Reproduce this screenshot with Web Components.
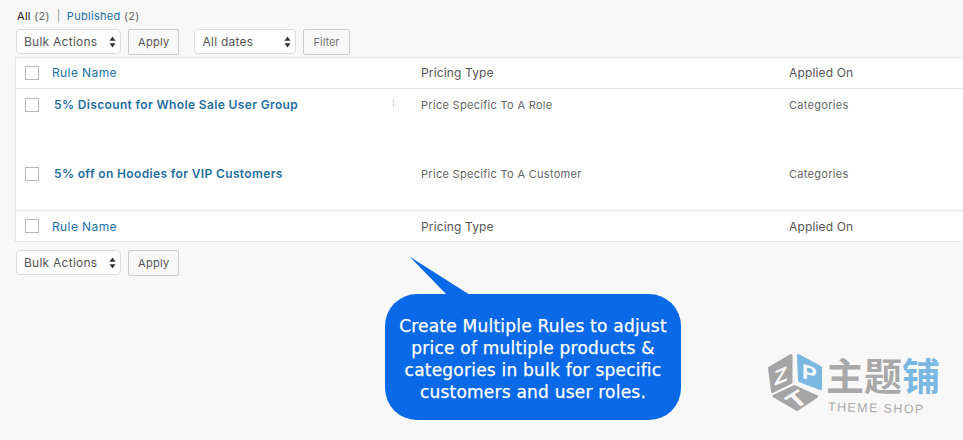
<!DOCTYPE html>
<html>
<head>
<meta charset="utf-8">
<title>Pricing Rules</title>
<style>
html, body { margin: 0; padding: 0; }
body {
    background: #f8f8f8;
    color: #444;
    font-family: Inter, "Liberation Sans", sans-serif;
    width: 963px;
    height: 440px;
    overflow: hidden;
    position: relative;
}
</style>
</head>
<body>
<list-page>
    <view-links></view-links>
    <table-nav>
        <select-box label="Bulk Actions" width="105"></select-box>
        <push-button label="Apply"></push-button>
        <select-box label="All dates" width="102" offset="8"></select-box>
        <push-button label="Filter" muted></push-button>
    </table-nav>
    <rule-table>
        <rule-row slot="head" kind="head" name="Rule Name" type="Pricing Type" applied="Applied On"></rule-row>
        <rule-row name="5% Discount for Whole Sale User Group" type="Price Specific To A Role" applied="Categories" dots></rule-row>
        <rule-row name="5% off on Hoodies for VIP Customers" type="Price Specific To A Customer" applied="Categories"></rule-row>
        <rule-row slot="foot" kind="foot" name="Rule Name" type="Pricing Type" applied="Applied On"></rule-row>
    </rule-table>
    <table-nav class="bottom">
        <select-box label="Bulk Actions" width="105"></select-box>
        <push-button label="Apply"></push-button>
    </table-nav>
</list-page>
<callout-bubble>Create Multiple Rules to adjust<br>price of multiple products &amp;<br>categories in bulk for specific<br>customers and user roles.</callout-bubble>
<shop-mark></shop-mark>

<script>
class ListPage extends HTMLElement {
    connectedCallback() {
        this.attachShadow({ mode: 'open' });
        this.shadowRoot.innerHTML = `
            <style>
                :host {
                    display: flex;
                    flex-direction: column;
                    padding: 8px 0 0 16px;
                }
            </style>
            <slot></slot>
        `;
    }
}

class ViewLinks extends HTMLElement {
    connectedCallback() {
        this.attachShadow({ mode: 'open' });
        this.shadowRoot.innerHTML = `
            <style>
                :host {
                    display: flex;
                    align-items: center;
                    height: 16px;
                    padding-left: 1px;
                    font-size: 11px;
                    letter-spacing: 0.3px;
                    color: #666;
                    white-space: pre;
                }
                b { font-weight: 400; color: #222; }
                a { color: #2271a5; text-decoration: none; }
                .sep { color: #999; margin: 0 6px 0 7px; }
            </style>
            <span><b>All</b> (2)</span><span class="sep">|</span><span><a>Published</a> (2)</span>
        `;
    }
}

class TableNav extends HTMLElement {
    connectedCallback() {
        this.attachShadow({ mode: 'open' });
        this.shadowRoot.innerHTML = `
            <style>
                :host {
                    display: flex;
                    gap: 7px;
                    margin-top: 5px;
                    height: 25px;
                    margin-bottom: 3px;
                }
                :host(.bottom) { margin-top: 8px; }
            </style>
            <slot></slot>
        `;
    }
}

class SelectBox extends HTMLElement {
    connectedCallback() {
        this.attachShadow({ mode: 'open' });
        const w = this.getAttribute('width');
        const off = this.getAttribute('offset') || 0;
        this.shadowRoot.innerHTML = `
            <style>
                :host {
                    display: flex;
                    align-items: center;
                    justify-content: space-between;
                    box-sizing: border-box;
                    width: ${w}px;
                    height: 25px;
                    margin-left: ${off}px;
                    padding: 0 4px 0 7px;
                    background: #fff;
                    border: 1px solid #dcdcdc;
                    border-radius: 4px;
                    font-size: 12px;
                    letter-spacing: 0.25px;
                    color: #555;
                }
                svg { display: block; }
            </style>
            <span>${this.getAttribute('label')}</span>
            <svg width="7" height="12" viewBox="0 0 7 12"><path d="M3.5 0.5L6.5 4.8H0.5Z M3.5 11.5L6.5 7.2H0.5Z" fill="#333"/></svg>
        `;
    }
}

class PushButton extends HTMLElement {
    connectedCallback() {
        this.attachShadow({ mode: 'open' });
        const muted = this.hasAttribute('muted');
        this.shadowRoot.innerHTML = `
            <style>
                :host {
                    display: flex;
                    align-items: center;
                    box-sizing: border-box;
                    height: 26px;
                    padding: 0 ${muted ? 9 : 9}px;
                    background: #f8f8f8;
                    border: 1px solid #ccc;
                    border-radius: 2px;
                    font-size: 11px;
                    letter-spacing: ${muted ? 0 : 0.3}px;
                    color: ${muted ? '#777' : '#555'};
                }
            </style>
            <span>${this.getAttribute('label')}</span>
        `;
    }
}

class RuleTable extends HTMLElement {
    connectedCallback() {
        this.attachShadow({ mode: 'open' });
        this.shadowRoot.innerHTML = `
            <style>
                :host {
                    display: block;
                    background: #fff;
                    border-left: 1px solid #e5e5e5;
                    border-bottom: 1px solid #e2e2e2;
                    border-top: 1px solid #e5e5e5;
                    margin-left: -1px;
                }
                .body { display: block; height: 121px; }
            </style>
            <slot name="head"></slot>
            <div class="body"><slot></slot></div>
            <slot name="foot"></slot>
        `;
    }
}

class RuleRow extends HTMLElement {
    connectedCallback() {
        this.attachShadow({ mode: 'open' });
        const kind = this.getAttribute('kind') || 'body';
        const dots = this.hasAttribute('dots') ? '<i class="dots"></i>' : '';
        this.shadowRoot.innerHTML = `
            <style>
                :host {
                    display: grid;
                    grid-template-columns: 405px 368px 1fr;
                    box-sizing: border-box;
                    position: relative;
                }
                :host([kind="head"]) {
                    height: 31px;
                    align-items: center;
                    border-bottom: 1px solid #e3e3e3;
                }
                :host([kind="head"]) .type, :host([kind="head"]) a { margin-top: -1px; }
                :host([kind="foot"]) {
                    height: 31px;
                    align-items: center;
                    border-top: 1px solid #e3e3e3;
                }
                :host(:not([kind])) {
                    height: 69px;
                    padding-top: 9px;
                    align-items: start;
                }
                .name { display: flex; align-items: center; gap: 13px; padding-left: 9px; }
                .check {
                    box-sizing: border-box;
                    width: 14px;
                    height: 14px;
                    flex: none;
                    background: #fff;
                    border: 1px solid #b4b9be;
                }
                a { color: #2271a5; text-decoration: none; font-size: 12px; letter-spacing: 0.4px; }
                .body-name { font-weight: 600; letter-spacing: 0.36px; margin: -1px 0 0 2px; color: #1f6f9f; }
                .type { font-size: 12px; color: #555; letter-spacing: 0.15px; }
                .cell { font-size: 11px; color: #666; letter-spacing: 0.3px; }
                .dots {
                    position: absolute;
                    left: 377px;
                    top: 11px;
                    width: 1px;
                    height: 5px;
                    background: repeating-linear-gradient(#7da7c4 0 1px, transparent 1px 2px);
                }
            </style>
            <div class="name">
                <span class="check"></span>
                ${kind === 'body'
                    ? `<a class="body-name">${this.getAttribute('name')}</a>`
                    : `<a>${this.getAttribute('name')}</a>`}
            </div>
            <div class="${kind === 'body' ? 'cell' : 'type'}">${this.getAttribute('type')}</div>
            <div class="${kind === 'body' ? 'cell' : 'type'}">${this.getAttribute('applied')}</div>
            ${dots}
        `;
    }
}

class CalloutBubble extends HTMLElement {
    connectedCallback() {
        this.attachShadow({ mode: 'open' });
        this.shadowRoot.innerHTML = `
            <style>
                :host {
                    position: absolute;
                    left: 385px;
                    top: 294px;
                    width: 296px;
                    height: 126px;
                    box-sizing: border-box;
                    padding-top: 3px;
                    display: flex;
                    align-items: center;
                    justify-content: center;
                    text-align: center;
                    background: #0969e6;
                    border-radius: 32px;
                    color: #fff;
                    font-family: "DejaVu Sans", sans-serif;
                    font-size: 17px;
                    letter-spacing: 0.22px;
                    line-height: 22px;
                    -webkit-text-stroke: 0.25px #fff;
                    white-space: nowrap;
                }
                svg { position: absolute; left: 24px; top: -38px; }
            </style>
            <svg width="62" height="40" viewBox="0 0 62 40"><path d="M0.5 0.5L38 39H61Z" fill="#0969e6"/></svg>
            <div><slot></slot></div>
        `;
    }
}

class ShopMark extends HTMLElement {
    connectedCallback() {
        this.attachShadow({ mode: 'open' });
        this.shadowRoot.innerHTML = `
            <style>
                :host {
                    position: absolute;
                    left: 766px;
                    top: 352px;
                    width: 180px;
                    height: 66px;
                    display: block;
                }
                svg { position: absolute; left: 0; top: 0; }
                .cn {
                    position: absolute;
                    left: 60px;
                    top: -1px;
                    font-family: "Noto Sans CJK SC", sans-serif;
                    font-weight: 700;
                    font-size: 38px;
                    line-height: 46px;
                    color: #a9a9a9;
                    white-space: nowrap;
                }
                .cn span { color: #7ab7e1; }
                .en {
                    position: absolute;
                    left: 62px;
                    top: 48px;
                    font-family: "Liberation Sans", sans-serif;
                    font-size: 12.5px;
                    letter-spacing: 1.4px;
                    color: #a9a9a9;
                    white-space: nowrap;
                    transform: rotate(1.5deg);
                    transform-origin: left center;
                }
            </style>
            <svg width="60" height="66" viewBox="0 0 60 66">
                <g stroke-width="3" stroke-linejoin="round">
                    <path d="M3.5 16L25 3.5V30.5L6.5 39.5Z" fill="#a5a5a5" stroke="#a5a5a5"/>
                    <path d="M32.5 3.5L54.5 15.5V36.5L33.5 28.5Z" fill="#7ab7e1" stroke="#7ab7e1"/>
                    <path d="M8 44L28.5 34.5L50.5 44.5L31 57.5Z" fill="#a5a5a5" stroke="#a5a5a5"/>
                </g>
                <g font-family="Liberation Sans" font-weight="700" font-size="21" fill="#f8f8f8">
                    <text transform="matrix(1.05,-0.45,0,1,8,34)">Z</text>
                    <text transform="matrix(1.05,0.3,0,1,36,26)">P</text>
                    <text transform="matrix(1.15,-0.72,0.8,0.8,29,58)">T</text>
                </g>
            </svg>
            <div class="cn">主题<span>铺</span></div>
            <div class="en">THEME SHOP</div>
        `;
    }
}

customElements.define('list-page', ListPage);
customElements.define('view-links', ViewLinks);
customElements.define('table-nav', TableNav);
customElements.define('select-box', SelectBox);
customElements.define('push-button', PushButton);
customElements.define('rule-table', RuleTable);
customElements.define('rule-row', RuleRow);
customElements.define('callout-bubble', CalloutBubble);
customElements.define('shop-mark', ShopMark);
</script>
</body>
</html>
